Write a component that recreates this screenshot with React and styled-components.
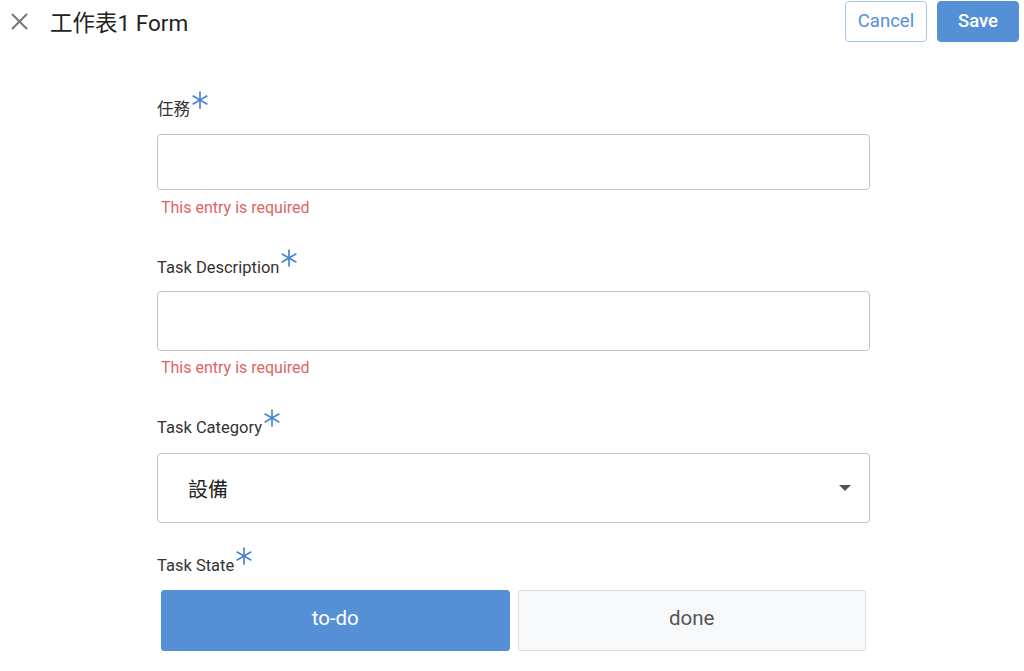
import styled, { createGlobalStyle } from 'styled-components'

const GlobalStyle = createGlobalStyle`
  body {
    margin: 0;
    background: #fff;
    font-family: Roboto, "Noto Sans CJK TC", sans-serif;
    color: #333;
  }
`

const Header = styled.header`
  display: flex;
  align-items: center;
  height: 43px;
  padding: 0 5px 0 10px;
`

const CloseButton = styled.button`
  display: flex;
  align-items: center;
  justify-content: center;
  width: 18px;
  height: 18px;
  padding: 0;
  border: none;
  background: none;
  cursor: pointer;
`

const Title = styled.h1`
  margin: -2px 0 0 22px;
  font-size: 22.5px;
  font-weight: 400;
  color: #222;
  flex: 1;
`

const Actions = styled.div`
  display: flex;
  gap: 10px;
`

const HeaderButton = styled.button`
  width: 82px;
  height: 41px;
  padding: 0 0 2px;
  border-radius: 4px;
  font-family: Roboto, sans-serif;
  font-size: 18.5px;
  font-weight: ${p => (p.$primary ? 500 : 400)};
  cursor: pointer;
  border: 1px solid ${p => (p.$primary ? '#5590d6' : '#a9c8ec')};
  background: ${p => (p.$primary ? '#5590d6' : '#fff')};
  color: ${p => (p.$primary ? '#fff' : '#5590d6')};
`

const Form = styled.form`
  width: 713px;
  margin: 57px 0 0 157px;
  display: flex;
  flex-direction: column;
`

const Field = styled.div`
  display: flex;
  flex-direction: column;
  margin-bottom: ${p => p.$gap}px;
`

const Label = styled.label`
  display: flex;
  align-items: flex-start;
  font-size: 16.5px;
  line-height: 20px;
  color: #333;
  margin-bottom: ${p => p.$gap || 14}px;
`

const Star = styled.svg`
  width: 18px;
  height: 18px;
  margin: -9px 0 0 1px;
`

const Input = styled.input`
  box-sizing: border-box;
  height: ${p => p.$h}px;
  width: 100%;
  border: 1px solid #c4c4c4;
  border-radius: 4px;
  padding: 0 14px;
  font-size: 16px;
  outline: none;
`

const Error = styled.div`
  margin: ${p => p.$top}px 0 0 4px;
  font-size: 16px;
  line-height: 20px;
  color: #e06464;
`

const Select = styled.div`
  box-sizing: border-box;
  height: 70px;
  border: 1px solid #c4c4c4;
  border-radius: 4px;
  display: flex;
  align-items: center;
  justify-content: space-between;
  padding: 0 18px 0 30px;
  font-size: 20px;
  color: #222;
`

const Caret = styled.span`
  width: 0;
  height: 0;
  border-left: 6px solid transparent;
  border-right: 6px solid transparent;
  border-top: 6px solid #555;
`

const Toggle = styled.div`
  display: grid;
  grid-template-columns: 1fr 1fr;
  gap: 8px;
  padding: 0 4px;
`

const ToggleButton = styled.button`
  height: 61px;
  padding: 0 0 6px;
  border-radius: 3px;
  font-family: Roboto, sans-serif;
  font-size: 20.5px;
  cursor: pointer;
  border: 1px solid ${p => (p.$active ? '#5590d6' : '#dcdcdc')};
  background: ${p => (p.$active ? '#5590d6' : '#f7f8f9')};
  color: ${p => (p.$active ? '#fff' : '#555')};
`

function Asterisk() {
  return (
    <Star viewBox="0 0 16 16" fill="none" stroke="#4a84cc" strokeWidth="1.5" strokeLinecap="round">
      <line x1="8" y1="1" x2="8" y2="15" />
      <line x1="1.9" y1="4.5" x2="14.1" y2="11.5" />
      <line x1="1.9" y1="11.5" x2="14.1" y2="4.5" />
    </Star>
  )
}

export default function App() {
  return (
    <>
      <GlobalStyle />
      <Header>
        <CloseButton aria-label="close">
          <svg width="17" height="17" viewBox="0 0 17 17" stroke="#777" strokeWidth="2" strokeLinecap="round">
            <line x1="1.5" y1="1.5" x2="15.5" y2="15.5" />
            <line x1="15.5" y1="1.5" x2="1.5" y2="15.5" />
          </svg>
        </CloseButton>
        <Title>工作表1 Form</Title>
        <Actions>
          <HeaderButton type="button">Cancel</HeaderButton>
          <HeaderButton type="button" $primary>Save</HeaderButton>
        </Actions>
      </Header>

      <Form>
        <Field $gap={40}>
          <Label>任務<Asterisk /></Label>
          <Input $h={56} />
          <Error $top={8}>This entry is required</Error>
        </Field>
        <Field $gap={40}>
          <Label $gap={13}>Task Description<Asterisk /></Label>
          <Input $h={60} />
          <Error $top={7}>This entry is required</Error>
        </Field>
        <Field $gap={33}>
          <Label $gap={15}>Task Category<Asterisk /></Label>
          <Select>
            <span>設備</span>
            <Caret />
          </Select>
        </Field>
        <Field $gap={0}>
          <Label>Task State<Asterisk /></Label>
          <Toggle>
            <ToggleButton type="button" $active>to-do</ToggleButton>
            <ToggleButton type="button">done</ToggleButton>
          </Toggle>
        </Field>
      </Form>
    </>
  )
}
